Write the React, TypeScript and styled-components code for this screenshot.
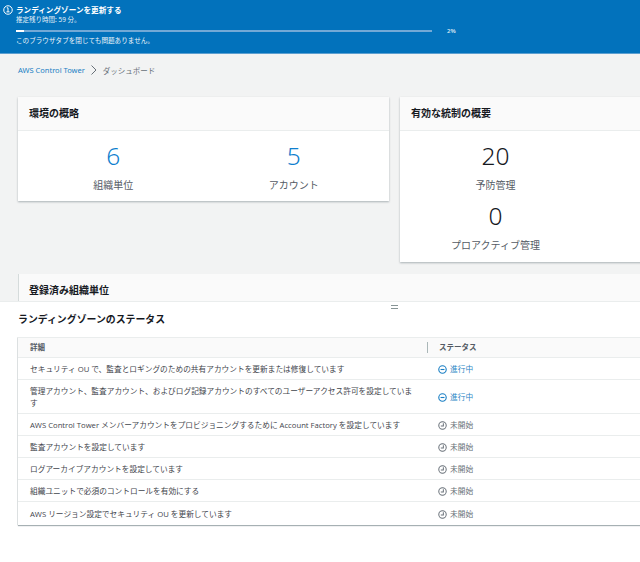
import React from "react";
import styled, { createGlobalStyle } from "styled-components";

const Global = createGlobalStyle`
  html, body { margin: 0; padding: 0; background: #fff; }
  body { font-family: "Noto Sans", "Noto Sans CJK JP", sans-serif; color: #16191f; }
  #root { width: 640px; height: 562px; overflow: hidden; }
`;

const TopPane = styled.div`
  height: 301px;
  background: #f2f3f3;
  overflow: hidden;
`;
const Banner = styled.div`
  height: 54px;
  background: #0272bc;
  border-bottom: 1px solid #5c9fd0;
  color: #fff;
  display: flex;
  gap: 3px;
  padding: 5px 0 0 3px;
  box-sizing: border-box;
`;
const BannerIcon = styled.svg`
  width: 10px;
  height: 10px;
  flex: none;
`;
const BannerBody = styled.div`
  display: flex;
  flex-direction: column;
  width: 445px;
`;
const BannerTitle = styled.div`
  font-size: 7.6px;
  font-weight: 700;
  line-height: 10px;
`;
const BannerSub = styled.div`
  font-size: 6.5px;
  line-height: 10px;
  color: #e4f0f8;
`;
const ProgressRow = styled.div`
  display: flex;
  align-items: center;
  gap: 15px;
  margin-top: 4px;
  height: 4px;
  width: 445px;
`;
const Track = styled.div`
  width: 416px;
  height: 2px;
  background: #73a9d6;
  flex: none;
`;
const Fill = styled.div`
  height: 100%;
  background: #fff;
`;
const Percent = styled.span`
  font-size: 6px;
  font-weight: 600;
  color: #d5e6f3;
`;
const BannerNote = styled.div`
  font-size: 6.6px;
  line-height: 10px;
  margin-top: 3px;
  color: #eef5fa;
`;
const Crumbs = styled.nav`
  display: flex;
  align-items: center;
  gap: 6px;
  height: 12px;
  margin: 10px 0 0 18px;
  font-size: 7.5px;
`;
const CrumbLink = styled.span`
  color: #1a7fc4;
`;
const CrumbCurrent = styled.span`
  color: #687078;
`;
const Cards = styled.div`
  display: grid;
  grid-template-columns: 371px 260px;
  column-gap: 11px;
  align-items: start;
  margin: 21px 0 0 18px;
`;
const Card = styled.section`
  background: #fff;
  box-shadow: 0 1px 2px rgba(0, 28, 36, 0.3);
`;
const CardHeader = styled.h2`
  margin: 0;
  height: 34px;
  background: #fafafa;
  border-bottom: 1px solid #eaeded;
  box-sizing: border-box;
  padding: 0 0 2px 11px;
  display: flex;
  align-items: center;
  font-size: 10px;
  font-weight: 700;
  color: #16191f;
`;
const Metrics = styled.div`
  display: grid;
  grid-template-columns: 1fr 1fr;
  padding: 9px 5px 9px;
`;
const Metric = styled.div`
  display: flex;
  flex-direction: column;
  align-items: center;
`;
const StackedMetrics = styled.div`
  width: 191px;
  padding: 9px 0 10px;
  display: flex;
  flex-direction: column;
  gap: 8px;
`;
const Value = styled.div<{ $link?: boolean }>`
  font-size: 24.5px;
  line-height: 31px;
  font-weight: 300;
  color: ${(p) => (p.$link ? "#0f7fce" : "#16191f")};
`;
const Label = styled.div`
  margin-top: 7px;
  font-size: 10px;
  line-height: 14px;
  color: #545b64;
`;
const ThirdCard = styled.section`
  margin: 12px 0 0 18px;
  background: #fafafa;
  border-left: 1px solid #d5dbdb;
  height: 40px;
  padding-left: 10px;
  font-size: 10px;
  font-weight: 700;
  line-height: 33px;
`;
const BottomPane = styled.div`
  position: relative;
  height: 261px;
  background: #fff;
  border-top: 1px solid #eaeded;
  box-sizing: border-box;
  padding-left: 18px;
`;
const Handle = styled.div`
  position: absolute;
  left: 391px;
  top: 3px;
  width: 7px;
  height: 4px;
  border-top: 1px solid #879596;
  border-bottom: 1px solid #879596;
  box-sizing: border-box;
`;
const PaneTitle = styled.h2`
  margin: 0;
  padding-top: 9px;
  height: 35px;
  box-sizing: border-box;
  font-size: 9.9px;
  line-height: 16px;
  font-weight: 700;
  color: #16191f;
`;
const Table = styled.div`
  box-shadow: 0 1px 1px rgba(0, 28, 36, 0.35), -1px 0 0 #eaeded;
  background: #fff;
`;
const HeaderRow = styled.div`
  display: grid;
  grid-template-columns: 409px 1fr;
  height: 21px;
  align-items: center;
  background: #fafafa;
  border-top: 1px solid #eaeded;
  border-bottom: 1px solid #eaeded;
  box-sizing: border-box;
  font-size: 7.5px;
  font-weight: 600;
  color: #545b64;
`;
const HeaderCell = styled.div<{ $divided?: boolean }>`
  padding-left: ${(p) => (p.$divided ? "11px" : "12px")};
  height: 11px;
  line-height: 11px;
  ${(p) => (p.$divided ? "border-left: 1px solid #aab7b8;" : "")}
`;
const Row = styled.div<{ $h: number }>`
  display: grid;
  grid-template-columns: 409px 1fr;
  align-items: center;
  height: ${(p) => p.$h}px;
  padding-top: 1px;
  border-bottom: 1px solid #eaeded;
  box-sizing: border-box;
  font-size: 7.7px;
  line-height: 12px;
  color: #545b64;
  &:last-child { border-bottom: none; height: 23px; }
`;
const DetailCell = styled.div`
  padding-left: 12px;
  width: 384px;
  box-sizing: content-box;
  font-family: "Open Sans", "Noto Sans CJK JP", sans-serif;
  font-weight: 400;
  color: #3f454c;
`;
const StatusCell = styled.div<{ $active?: boolean }>`
  display: flex;
  align-items: center;
  gap: 3px;
  padding-left: 11px;
  color: ${(p) => (p.$active ? "#2b86c5" : "#687078")};
`;
const StatusIcon = styled.svg`
  width: 9px;
  height: 9px;
  flex: none;
`;

const Progress = () => (
  <StatusIcon viewBox="0 0 16 16" fill="none" stroke="#1a7fc4" strokeWidth="2">
    <circle cx="8" cy="8" r="6.6" />
    <path d="M4.5 8h7" />
  </StatusIcon>
);
const Pending = () => (
  <StatusIcon viewBox="0 0 16 16" fill="none" stroke="#687078" strokeWidth="1.8">
    <circle cx="8" cy="8" r="6.6" />
    <path d="M9.5 3.8V9H5" />
  </StatusIcon>
);

const rows: { text: string; active?: boolean; h: number }[] = [
  { text: "セキュリティ OU で、監査とロギングのための共有アカウントを更新または修復しています", active: true, h: 22 },
  { text: "管理アカウント、監査アカウント、およびログ記録アカウントのすべてのユーザーアクセス許可を設定しています", active: true, h: 34 },
  { text: "AWS Control Tower メンバーアカウントをプロビジョニングするために Account Factory を設定しています", h: 22 },
  { text: "監査アカウントを設定しています", h: 22 },
  { text: "ログアーカイブアカウントを設定しています", h: 22 },
  { text: "組織ユニットで必須のコントロールを有効にする", h: 22 },
  { text: "AWS リージョン設定でセキュリティ OU を更新しています", h: 22 },
];

export default function App() {
  return (
    <>
      <Global />
      <TopPane>
        <Banner>
          <BannerIcon viewBox="0 0 16 16" fill="none" stroke="#fff" strokeWidth="1.6">
            <circle cx="8" cy="8" r="6.8" />
            <path d="M6 4.5h2v6.5M5.5 11h5" />
          </BannerIcon>
          <BannerBody>
            <BannerTitle>ランディングゾーンを更新する</BannerTitle>
            <BannerSub>推定残り時間: 59 分。</BannerSub>
            <ProgressRow>
              <Track>
                <Fill style={{ width: "2%" }} />
              </Track>
              <Percent>2%</Percent>
            </ProgressRow>
            <BannerNote>このブラウザタブを閉じても問題ありません。</BannerNote>
          </BannerBody>
        </Banner>
        <Crumbs>
          <CrumbLink>AWS Control Tower</CrumbLink>
          <svg width="6" height="10" viewBox="0 0 6 10" fill="none" stroke="#687078" strokeWidth="1">
            <path d="M0.5 0.5 5 5 0.5 9.5" />
          </svg>
          <CrumbCurrent>ダッシュボード</CrumbCurrent>
        </Crumbs>
        <Cards>
          <Card>
            <CardHeader>環境の概略</CardHeader>
            <Metrics>
              <Metric>
                <Value $link>6</Value>
                <Label>組織単位</Label>
              </Metric>
              <Metric>
                <Value $link>5</Value>
                <Label>アカウント</Label>
              </Metric>
            </Metrics>
          </Card>
          <Card>
            <CardHeader>有効な統制の概要</CardHeader>
            <StackedMetrics>
              <Metric>
                <Value>20</Value>
                <Label>予防管理</Label>
              </Metric>
              <Metric>
                <Value>0</Value>
                <Label>プロアクティブ管理</Label>
              </Metric>
            </StackedMetrics>
          </Card>
        </Cards>
        <ThirdCard>登録済み組織単位</ThirdCard>
      </TopPane>
      <BottomPane>
        <Handle />
        <PaneTitle>ランディングゾーンのステータス</PaneTitle>
        <Table>
          <HeaderRow>
            <HeaderCell>詳細</HeaderCell>
            <HeaderCell $divided>ステータス</HeaderCell>
          </HeaderRow>
          {rows.map((r) => (
            <Row key={r.text} $h={r.h}>
              <DetailCell>{r.text}</DetailCell>
              <StatusCell $active={r.active}>
                {r.active ? <Progress /> : <Pending />}
                {r.active ? "進行中" : "未開始"}
              </StatusCell>
            </Row>
          ))}
        </Table>
      </BottomPane>
    </>
  );
}
